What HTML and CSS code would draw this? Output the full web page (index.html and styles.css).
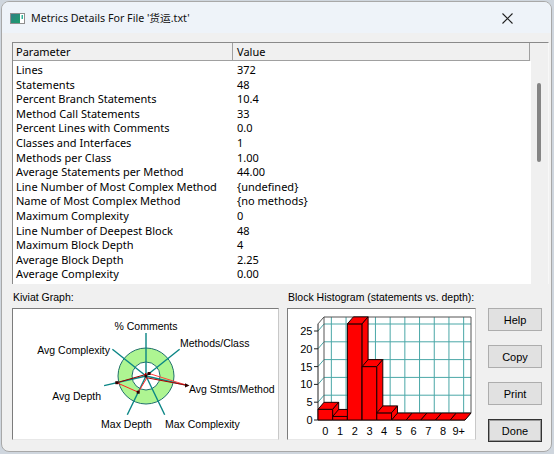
FILE: index.html
```html
<!DOCTYPE html>
<html>
<head>
<meta charset="utf-8">
<link rel="stylesheet" href="styles.css">
</head>
<body>
<div class="window">
  <div class="titlebar">
    <svg class="app-icon" width="15" height="11" viewBox="0 0 15 11">
      <defs>
        <linearGradient id="ig" x1="0" y1="0" x2="1" y2="1">
          <stop offset="0" stop-color="#2f7f86"/>
          <stop offset="1" stop-color="#1b9e6a"/>
        </linearGradient>
      </defs>
      <rect x="0.5" y="0.5" width="14" height="10" fill="#fff" stroke="#8e8e8e"/>
      <rect x="1" y="1" width="9" height="9" fill="url(#ig)"/>
      <rect x="11.5" y="2" width="1.5" height="4" fill="#2fb39a"/>
    </svg>
    <span class="title">Metrics Details For File '货运.txt'</span>
    <svg class="close" width="11" height="11" viewBox="0 0 11 11">
      <path d="M0.5 0.5 L10.5 10.5 M10.5 0.5 L0.5 10.5" stroke="#222" stroke-width="1.1" fill="none"/>
    </svg>
  </div>
  <div class="content">
    <div class="listbox">
      <div class="list-main">
        <div class="header">
          <div class="hcell h1">Parameter</div>
          <div class="hcell h2">Value</div>
        </div>
        <div class="rows">
          <div class="row"><span class="c1">Lines</span><span class="c2">372</span></div>
          <div class="row"><span class="c1">Statements</span><span class="c2">48</span></div>
          <div class="row"><span class="c1">Percent Branch Statements</span><span class="c2">10.4</span></div>
          <div class="row"><span class="c1">Method Call Statements</span><span class="c2">33</span></div>
          <div class="row"><span class="c1">Percent Lines with Comments</span><span class="c2">0.0</span></div>
          <div class="row"><span class="c1">Classes and Interfaces</span><span class="c2">1</span></div>
          <div class="row"><span class="c1">Methods per Class</span><span class="c2">1.00</span></div>
          <div class="row"><span class="c1">Average Statements per Method</span><span class="c2">44.00</span></div>
          <div class="row"><span class="c1">Line Number of Most Complex Method</span><span class="c2">{undefined}</span></div>
          <div class="row"><span class="c1">Name of Most Complex Method</span><span class="c2">{no methods}</span></div>
          <div class="row"><span class="c1">Maximum Complexity</span><span class="c2">0</span></div>
          <div class="row"><span class="c1">Line Number of Deepest Block</span><span class="c2">48</span></div>
          <div class="row"><span class="c1">Maximum Block Depth</span><span class="c2">4</span></div>
          <div class="row"><span class="c1">Average Block Depth</span><span class="c2">2.25</span></div>
          <div class="row"><span class="c1">Average Complexity</span><span class="c2">0.00</span></div>
        </div>
      </div>
      <div class="scrollbar"><div class="thumb"></div></div>
    </div>

    <div class="lower">
      <div class="panel kiviat">
        <div class="label">Kiviat Graph:</div>
        <div class="box">
          <svg width="265" height="130" viewBox="13 309 265 130">
            <circle cx="146" cy="376" r="28" fill="#aef592" stroke="#1f6f6a" stroke-width="1"/>
            <circle cx="146" cy="376" r="14" fill="#fff" stroke="#1f6f6a" stroke-width="1"/>
            <g stroke="#0a8585" stroke-width="1.4">
              <line x1="146" y1="376" x2="146" y2="333"/>
              <line x1="146" y1="376" x2="179.6" y2="349.2"/>
              <line x1="146" y1="376" x2="187.9" y2="385.6"/>
              <line x1="146" y1="376" x2="164.7" y2="414.7"/>
              <line x1="146" y1="376" x2="127.3" y2="414.7"/>
              <line x1="146" y1="376" x2="104.1" y2="385.6"/>
              <line x1="146" y1="376" x2="112.4" y2="349.2"/>
            </g>
            <g fill="none" stroke-width="1">
              <line x1="149.1" y1="373.5" x2="187" y2="385.3" stroke="#ff4040"/>
              <line x1="187" y1="385.3" x2="146.9" y2="377.8" stroke="#b00000"/>
              <line x1="146.9" y1="377.8" x2="138.2" y2="392.2" stroke="#ff2020"/>
              <line x1="138.2" y1="392.2" x2="116.8" y2="382.7" stroke="#ff2020"/>
              <line x1="116.8" y1="382.7" x2="149.1" y2="373.5" stroke="#9a0000"/>
              <line x1="144.4" y1="374.8" x2="146" y2="373" stroke="#c00000"/>
            </g>
            <g fill="#300000">
              <rect x="147.6" y="372" width="3" height="3"/>
              <rect x="144.6" y="375" width="2.5" height="2.5"/>
              <rect x="115.3" y="381.2" width="3" height="3"/>
              <rect x="136.7" y="390.7" width="3" height="3"/>
              <path d="M185 383.3 L189.5 385.4 L185 387.5 Z"/>
            </g>
            <g font-family="Liberation Sans, Arial, sans-serif" font-size="10.5" fill="#000">
              <text x="146" y="329.5" text-anchor="middle">% Comments</text>
              <text x="180" y="346.5">Methods/Class</text>
              <text x="110" y="353.5" text-anchor="end">Avg Complexity</text>
              <text x="189" y="392.5">Avg Stmts/Method</text>
              <text x="101" y="399.5" text-anchor="end">Avg Depth</text>
              <text x="126.5" y="427.5" text-anchor="middle">Max Depth</text>
              <text x="165" y="427.5">Max Complexity</text>
            </g>
          </svg>
        </div>
      </div>

      <div class="panel hist">
        <div class="label">Block Histogram (statements vs. depth):</div>
        <div class="box">
          <svg width="187" height="130" viewBox="288 309 187 130">
            <g stroke="#4aa7a7" stroke-width="1" fill="none">
              <line x1="324" y1="413" x2="471" y2="413"/>
              <line x1="324" y1="395.2" x2="471" y2="395.2"/>
              <line x1="324" y1="377.4" x2="471" y2="377.4"/>
              <line x1="324" y1="359.6" x2="471" y2="359.6"/>
              <line x1="324" y1="341.8" x2="471" y2="341.8"/>
              <line x1="324" y1="324" x2="471" y2="324"/>
              <line x1="331.35" y1="317" x2="331.35" y2="413"/>
              <line x1="346.05" y1="317" x2="346.05" y2="413"/>
              <line x1="360.75" y1="317" x2="360.75" y2="413"/>
              <line x1="375.45" y1="317" x2="375.45" y2="413"/>
              <line x1="390.15" y1="317" x2="390.15" y2="413"/>
              <line x1="404.85" y1="317" x2="404.85" y2="413"/>
              <line x1="419.55" y1="317" x2="419.55" y2="413"/>
              <line x1="434.25" y1="317" x2="434.25" y2="413"/>
              <line x1="448.95" y1="317" x2="448.95" y2="413"/>
              <line x1="463.65" y1="317" x2="463.65" y2="413"/>
              <line x1="318" y1="402.2" x2="324" y2="395.2"/>
              <line x1="318" y1="384.4" x2="324" y2="377.4"/>
              <line x1="318" y1="366.6" x2="324" y2="359.6"/>
              <line x1="318" y1="348.8" x2="324" y2="341.8"/>
              <line x1="318" y1="331" x2="324" y2="324"/>
            </g>
            <g stroke="#555" stroke-width="1" fill="none">
              <polyline points="324,413 324,317 471,317 471,413"/>
              <line x1="318" y1="323.9" x2="324" y2="316.9"/>
              <line x1="465" y1="420" x2="471" y2="413"/>
            </g>
            <g stroke="#222" stroke-width="1" fill="none">
              <line x1="318" y1="323.9" x2="318" y2="420"/>
              <line x1="318" y1="420" x2="465" y2="420"/>
              <line x1="314" y1="420" x2="318" y2="420"/>
              <line x1="314" y1="402.2" x2="318" y2="402.2"/>
              <line x1="314" y1="384.4" x2="318" y2="384.4"/>
              <line x1="314" y1="366.6" x2="318" y2="366.6"/>
              <line x1="314" y1="348.8" x2="318" y2="348.8"/>
              <line x1="314" y1="331" x2="318" y2="331"/>
            </g>
            <g fill="#ff0000" stroke="#1a0000" stroke-width="1" stroke-linejoin="round">
              <polygon points="391.5,420 397.5,413 412.2,413 406.2,420"/>
              <polygon points="406.2,420 412.2,413 426.9,413 420.9,420"/>
              <polygon points="420.9,420 426.9,413 441.6,413 435.6,420"/>
              <polygon points="435.6,420 441.6,413 456.3,413 450.3,420"/>
              <polygon points="450.3,420 456.3,413 471,413 465,420"/>

              <rect x="318" y="409.32" width="14.7" height="10.68"/>
              <polygon points="318,409.32 324,402.32 338.7,402.32 332.7,409.32"/>
              <polygon points="332.7,409.32 338.7,402.32 338.7,413 332.7,420"/>

              <rect x="332.7" y="416.44" width="14.7" height="3.56"/>
              <polygon points="332.7,416.44 338.7,409.44 353.4,409.44 347.4,416.44"/>
              <polygon points="347.4,416.44 353.4,409.44 353.4,413 347.4,420"/>

              <rect x="347.4" y="323.88" width="14.7" height="96.12"/>
              <polygon points="347.4,323.88 353.4,316.88 368.1,316.88 362.1,323.88"/>
              <polygon points="362.1,323.88 368.1,316.88 368.1,413 362.1,420"/>

              <rect x="362.1" y="366.6" width="14.7" height="53.4"/>
              <polygon points="362.1,366.6 368.1,359.6 382.8,359.6 376.8,366.6"/>
              <polygon points="376.8,366.6 382.8,359.6 382.8,413 376.8,420"/>

              <rect x="376.8" y="412.88" width="14.7" height="7.12"/>
              <polygon points="376.8,412.88 382.8,405.88 397.5,405.88 391.5,412.88"/>
              <polygon points="391.5,412.88 397.5,405.88 397.5,413 391.5,420"/>
            </g>
            <g font-family="Liberation Sans, Arial, sans-serif" font-size="11" fill="#000">
              <g text-anchor="end">
                <text x="312.5" y="335">25</text>
                <text x="312.5" y="352.8">20</text>
                <text x="312.5" y="370.6">15</text>
                <text x="312.5" y="388.4">10</text>
                <text x="312.5" y="406.2">5</text>
                <text x="312.5" y="424">0</text>
              </g>
              <g text-anchor="middle">
                <text x="325.35" y="434.5">0</text>
                <text x="340.05" y="434.5">1</text>
                <text x="354.75" y="434.5">2</text>
                <text x="369.45" y="434.5">3</text>
                <text x="384.15" y="434.5">4</text>
                <text x="398.85" y="434.5">5</text>
                <text x="413.55" y="434.5">6</text>
                <text x="428.25" y="434.5">7</text>
                <text x="442.95" y="434.5">8</text>
                <text x="458.65" y="434.5">9+</text>
              </g>
            </g>
          </svg>
        </div>
      </div>

      <div class="buttons">
        <div class="btn">Help</div>
        <div class="btn">Copy</div>
        <div class="btn">Print</div>
        <div class="btn default">Done</div>
      </div>
    </div>
  </div>
</div>
</body>
</html>
```

FILE: styles.css
```css
* { box-sizing: border-box; }

body {
  margin: 0;
  background: #cfd6de;
  font-family: "Noto Sans", "Noto Sans CJK SC", sans-serif;
  color: #000;
}

.window {
  margin: 1px 0 0 1px;
  width: 551px;
  height: 451px;
  border: 1px solid #a8a8a8;
  border-radius: 8px;
  background: #f0f0f0;
  overflow: hidden;
  display: flex;
  flex-direction: column;
}

.titlebar {
  flex: none;
  height: 31px;
  background: #eef3f9;
  display: flex;
  align-items: center;
  padding-left: 8px;
}

.app-icon {
  flex: none;
  margin-right: 6px;
  margin-top: 1px;
}

.title {
  font-family: "Noto Sans", "Noto Sans CJK SC", sans-serif;
  font-size: 10.7px;
  color: #111;
}

.close {
  flex: none;
  margin-left: auto;
  margin-right: 38px;
  margin-top: 1px;
}

.content {
  flex: 1;
  padding: 9px 0 0 10px;
  display: flex;
  flex-direction: column;
}

.listbox {
  display: flex;
  width: 537px;
  height: 242px;
  border-top: 1px solid #8a8a8a;
  border-left: 1px solid #8a8a8a;
  border-right: 1px solid #f8f8f8;
  background: #fff;
  flex: none;
}

.list-main {
  width: 518px;
  display: flex;
  flex-direction: column;
}

.header {
  display: flex;
  height: 18px;
  background: #f0f0f0;
}

.hcell {
  height: 18px;
  line-height: 17px;
  font-size: 11px;
  border-bottom: 1px solid #a0a0a0;
  border-right: 1px solid #a0a0a0;
}

.h1 { width: 220px; padding-left: 3px; }
.h2 { width: 297px; padding-left: 4px; }

.rows {
  padding-top: 2px;
  background: #fff;
}

.row {
  display: grid;
  grid-template-columns: 220px 1fr;
  height: 14.6px;
  line-height: 14.6px;
  font-size: 11px;
  white-space: nowrap;
}

.c1 { padding-left: 3px; }
.c2 { padding-left: 4px; }

.scrollbar {
  width: 17px;
  background: #f0f0f0;
}

.thumb {
  margin: 40px 0 0 6px;
  width: 4px;
  height: 79px;
  border-radius: 2px;
  background: #858585;
}

.lower {
  display: flex;
  margin-top: 7px;
}

.panel { flex: none; }

.kiviat { width: 267px; margin-right: 8px; }
.hist { width: 189px; margin-right: 12px; }

.label {
  height: 17px;
  line-height: 13px;
  font-family: "Liberation Sans", Arial, sans-serif;
  font-size: 10.5px;
  padding-left: 1px;
}

.box {
  height: 132px;
  background: #fff;
  border: 1px solid;
  border-color: #7c7c7c #c8c8c8 #e8e8e8 #7c7c7c;
}

.box svg { display: block; }

.buttons {
  width: 54px;
  padding-top: 17px;
  display: flex;
  flex-direction: column;
  gap: 14px;
}

.btn {
  height: 23px;
  border: 1px solid #adadad;
  background: #e1e1e1;
  display: flex;
  align-items: center;
  justify-content: center;
  font-family: "Liberation Sans", Arial, sans-serif;
  font-size: 11px;
}

.btn.default {
  border-color: #333;
  box-shadow: inset 0 0 0 1px #9a9a9a;
}
```
